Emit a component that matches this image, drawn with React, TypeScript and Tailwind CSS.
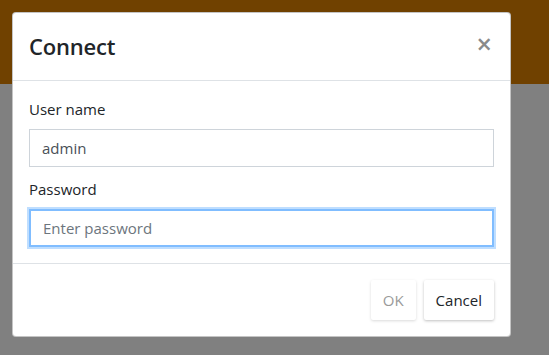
import React from "react";

export default function App() {
  return (
    <div
      className="relative w-[549px] h-[355px] overflow-hidden bg-[#808080]"
      style={{ fontFamily: '"Open Sans", "Noto Sans", sans-serif' }}
    >
      {/* page behind the backdrop */}
      <div className="h-[84px] bg-[#704100]" />

      {/* Dialog */}
      <div className="absolute left-[12px] top-[12px] w-[499px] bg-white rounded-[4px] border border-[#6b6b6b]/40">
        <div className="flex items-center justify-between h-[68px] px-4 border-b border-[#dee2e6]">
          <h2 className="text-[22px] font-semibold text-[#212529] tracking-[-0.2px]">Connect</h2>
          <span className="text-[27px] font-semibold text-[#8a8a8a] leading-none pr-[2px] -mt-[6px]">×</span>
        </div>

        <div className="px-4 pt-[18px] pb-[16px]">
          <label className="block text-[15px] text-[#212529] leading-[20px] mb-[10px]">User name</label>
          <input
            readOnly
            value="admin"
            className="block w-full h-[38px] px-3 text-[15px] text-[#495057] border border-[#ced4da] bg-white outline-none"
          />
          <label className="block text-[15px] text-[#212529] leading-[20px] mt-[12px] mb-[10px]">Password</label>
          <input
            type="password"
            placeholder="Enter password"
            className="block w-full h-[38px] px-3 text-[15px] text-[#495057] placeholder:text-[#6c757d] border-2 border-[#80bdff] bg-white outline-none shadow-[0_0_0_2px_rgba(0,123,255,0.25)]"
          />
        </div>

        <div className="flex justify-end gap-[8px] px-4 pt-[16px] pb-[16px] border-t border-[#dee2e6]">
          <button className="h-[40px] px-[12px] bg-white text-[15px] text-[#9a9a9a] shadow-[0_1px_3px_rgba(0,0,0,0.15)] rounded-[2px]">
            OK
          </button>
          <button className="h-[40px] px-[12px] bg-white text-[15px] text-[#212529] shadow-[0_1px_3px_rgba(0,0,0,0.25)] rounded-[2px]">
            Cancel
          </button>
        </div>
      </div>
    </div>
  );
}
